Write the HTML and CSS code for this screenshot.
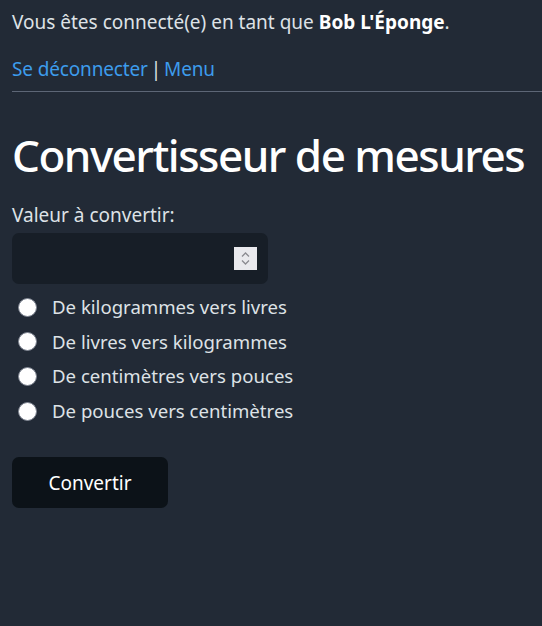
FILE: index.html
```html
<!DOCTYPE html>
<html lang="fr">
<head>
<meta charset="utf-8">
<title>Convertisseur de mesures</title>
<link rel="stylesheet" href="styles.css">
</head>
<body>
<header class="top">
  <p class="status">Vous êtes connecté(e) en tant que <strong>Bob L'Éponge</strong>.</p>
  <p class="nav"><a href="#">Se déconnecter</a> | <a href="#">Menu</a></p>
</header>
<hr class="rule">
<main class="content">
  <h1 class="title">Convertisseur de mesures</h1>
  <form class="form">
    <label class="label" for="valeur">Valeur à convertir:</label>
    <div class="field">
      <input class="input" id="valeur" type="text">
      <span class="spin">
        <svg width="11" height="15" viewBox="0 0 11 15"><path d="M2 5.5 L5.5 2 L9 5.5 M2 9.5 L5.5 13 L9 9.5" fill="none" stroke="#8a8a90" stroke-width="1.3"/></svg>
      </span>
    </div>
    <div class="options">
      <label class="option"><input type="radio" name="conv"><span class="dot"></span>De kilogrammes vers livres</label>
      <label class="option"><input type="radio" name="conv"><span class="dot"></span>De livres vers kilogrammes</label>
      <label class="option"><input type="radio" name="conv"><span class="dot"></span>De centimètres vers pouces</label>
      <label class="option"><input type="radio" name="conv"><span class="dot"></span>De pouces vers centimètres</label>
    </div>
    <button class="btn" type="button">Convertir</button>
  </form>
</main>
</body>
</html>
```
FILE: styles.css
```css
html, body {
  margin: 0;
  padding: 0;
  background: #222a36;
}
body {
  font-family: "Noto Sans", "Open Sans", sans-serif;
  font-size: 19px;
  line-height: 24px;
  color: #dee2e6;
  padding-left: 12px;
}
.top {
  display: flex;
  flex-direction: column;
  gap: 23px;
  padding-top: 10px;
}
.status, .nav {
  margin: 0;
}
.status strong {
  color: #ffffff;
  font-weight: 700;
}
.nav {
  word-spacing: -2px;
}
.nav a {
  color: #3d9cec;
  text-decoration: none;
  word-spacing: 0;
  letter-spacing: -0.15px;
}
.rule {
  margin: 10px 0 0 0;
  border: 0;
  border-top: 1px solid #5d6676;
  height: 0;
}
.content {
  padding-top: 34px;
}
.title {
  margin: 0;
  font-size: 44px;
  letter-spacing: -1.5px;
  line-height: 58px;
  font-weight: 500;
  color: #ffffff;
  white-space: nowrap;
}
.form {
  display: flex;
  flex-direction: column;
  align-items: flex-start;
  margin-top: 19px;
}
.label {
  line-height: 24px;
}
.field {
  position: relative;
  margin-top: 6px;
  width: 256px;
  height: 51px;
}
.input {
  box-sizing: border-box;
  width: 100%;
  height: 100%;
  border: 0;
  border-radius: 7px;
  background: #171e27;
  color: #dee2e6;
  outline: none;
  font: inherit;
  padding: 0 12px;
}
.spin {
  position: absolute;
  left: 222px;
  top: 14px;
  width: 23px;
  height: 23px;
  background: #e9e9ed;
  display: flex;
  align-items: center;
  justify-content: center;
}
.options {
  display: flex;
  flex-direction: column;
  margin-top: 11px;
  gap: 10.7px;
}
.option {
  display: flex;
  align-items: center;
  height: 24px;
  font-size: 18.6px;
}
.option input {
  display: none;
}
.dot {
  box-sizing: border-box;
  width: 19px;
  height: 19px;
  border-radius: 50%;
  background: #ffffff;
  border: 1px solid #7d8390;
  margin: 0 15px 0 6px;
  flex: none;
}
.btn {
  margin-top: 34px;
  width: 156px;
  height: 51px;
  border: 0;
  border-radius: 7px;
  background: #0c1218;
  color: #ffffff;
  font: inherit;
  font-size: 19px;
  cursor: pointer;
}
```
